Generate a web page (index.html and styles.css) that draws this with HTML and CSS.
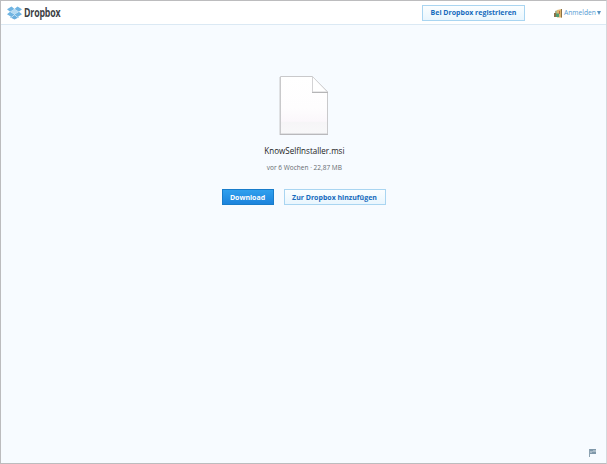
FILE: index.html
```
<!DOCTYPE html>
<html lang="de">
<head>
<meta charset="utf-8">
<title>KnowSelfInstaller.msi</title>
<link rel="stylesheet" href="styles.css">
</head>
<body>
<div class="page">
  <header class="header">
    <a class="brand">
      <svg class="logo" viewBox="0 0 16 14" width="15" height="14">
        <path fill="#6fb4e2" d="M4.800 0 8 2.700 3.300 5.600 0 3zM11.200 0 16 3l-3.300 2.600L8 2.700zM0 8.200l3.300-2.600L8 8.500l-3.200 2.700zM16 8.200l-3.300-2.600L8 8.500l3.200 2.700z"/>
        <path fill="#b5daf2" d="M8 2.700l4.700 2.900L8 8.500 3.300 5.600z"/>
        <path fill="#6aaede" d="M3.200 10.800l1.600 1L8 9.100l3.200 2.700 1.600-1v.8L8 14l-4.800-2.400z"/>
      </svg>
      <span class="wordmark">Dropbox</span>
    </a>
    <a class="button register"><span>Bei Dropbox registrieren</span></a>
    <a class="signin">
      <svg class="avatar" viewBox="0 0 9 9" width="9" height="9">
        <path fill="#a9b28a" d="M1 2l3-1v7H1z"/>
        <path fill="#dfb56c" d="M3 1l5-1v8.500H3z"/>
        <path fill="#8a7148" d="M0 4h2v4H0zM7 0h1v8.500H7z"/>
        <path fill="#c06a42" d="M5 2h1v3H5z"/>
        <path fill="#4f9c70" d="M2 4.500h3v3.500H2z"/>
      </svg>
      <span class="signin-label">Anmelden</span>
      <svg class="caret" viewBox="0 0 4 4" width="4" height="4"><path fill="#5893c2" d="M0 0h4L2 4z"/></svg>
    </a>
  </header>
  <main class="content">
    <svg class="file" viewBox="0 0 52 62" width="52" height="62">
      <defs>
        <linearGradient id="paper" x1="0" y1="0" x2="0" y2="1">
          <stop offset="0" stop-color="#fff"/><stop offset=".55" stop-color="#fefdfe"/>
          <stop offset=".78" stop-color="#fbf7fb"/><stop offset=".79" stop-color="#f6f5f7"/><stop offset="1" stop-color="#f8f8f9"/>
        </linearGradient>
      </defs>
      <path d="M2.500 1.500h32l15 15v42.500h-47z" fill="url(#paper)" stroke="#c9c9cb"/>
      <path d="M2 59.500h48" stroke="#b9b9bc"/>
      <path d="M1.500 2v58" stroke="#e0e2e5"/>
      <path d="M34.500 1.500v15.500h15z" fill="#fff" stroke="#d3d3d5"/>
      <path d="M34 17.500h16" stroke="#b5b5b7"/>
    </svg>
    <h1 class="filename"><span>KnowSelfInstaller.msi</span></h1>
    <p class="meta"><span>vor 6 Wochen · 22,87 MB</span></p>
    <div class="actions">
      <a class="button primary"><span>Download</span></a>
      <a class="button add"><span>Zur Dropbox hinzufügen</span></a>
    </div>
  </main>
  <footer class="footer">
    <svg viewBox="0 0 7 8" width="7" height="8"><path fill="#8da2b1" d="M0 0h1v8H0z"/><path fill="#a9bac6" d="M1 0h6v5H1z"/><path fill="#7f98aa" d="M1 0h6v1H4v1H1zM3 3h4v2H1V4h2z"/></svg>
  </footer>
</div>
</body>
</html>
```

FILE: styles.css
```
* { box-sizing: border-box; }
body { margin: 0; font-family: "Open Sans", sans-serif; }
.page {
  width: 607px;
  height: 464px;
  display: flex;
  flex-direction: column;
  background: #f7fbff;
  border: 1px solid #bcbcbe;
  border-right-color: #d6d8dc;
}
.header {
  height: 24px;
  flex: none;
  display: flex;
  align-items: center;
  padding: 0 5px 0 6px;
  background: #fff;
  border-bottom: 1px solid #dbe9f4;
}
.brand { display: flex; align-items: center; gap: 2px; }
.logo { display: block; }
.wordmark {
  font: bold 12px/14px "Open Sans", sans-serif;
  letter-spacing: -0.2px;
  color: #3d4145;
  width: 37px;
  transform: scaleX(.73);
  transform-origin: left;
}
.button {
  display: flex;
  align-items: center;
  justify-content: center;
  height: 16px;
  border: 1px solid #a9d5f1;
  background: linear-gradient(#fbfeff, #e9f6fe);
  color: #176bbd;
  font-size: 7px;
  line-height: 12px;
  font-weight: 700;
  white-space: nowrap;
}
.register { width: 103px; margin-left: auto; }
.signin { display: flex; align-items: center; margin-left: 29px; padding-top: 1px; }
.avatar { margin-right: 1px; }
.signin-label { font-size: 6.700px; line-height: 12px; color: #559bd3; width: 32px; white-space: nowrap; }
.caret { margin-left: 1px; }
.content { flex: 1; display: flex; flex-direction: column; align-items: center; padding-top: 50px; }
.file { display: block; margin-left: 1px; }
.filename { margin: 7px 0 0 1px; font-size: 8.500px; line-height: 14px; font-weight: 400; color: #222; }
.filename span { display: block; transform: scaleX(.945); }
.meta { margin: 4px 0 0 1px; font-size: 7px; line-height: 12px; color: #666b70; }
.meta span { display: block; transform: scaleX(.93); }
.actions { display: flex; gap: 10px; margin-top: 15px; }
.actions .button { padding-top: 1px; }
.primary { width: 52px; background: linear-gradient(#30a0ee, #1c83dc); border-color: #187cca; color: #fff; }
.add { width: 102px; }
.footer { height: 18px; display: flex; justify-content: flex-end; padding: 4px 10px 0 0; }
```
